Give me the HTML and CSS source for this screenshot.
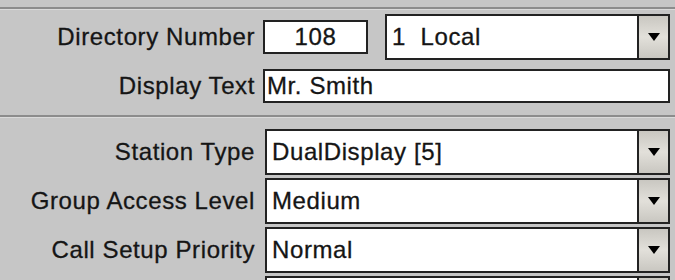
FILE: index.html
```html
<!DOCTYPE html>
<html lang="en">
<head>
    <meta charset="UTF-8">
    <title>Station Settings</title>
    <link rel="stylesheet" href="styles.css">
</head>
<body>
    <div class="separator"></div>
    <div class="section first">
        <div class="row">
            <div class="label">Directory Number</div>
            <div class="field-group">
                <div class="textbox number">108</div>
                <div class="dropdown">
                    <div class="value">1&nbsp;&nbsp;Local</div>
                    <div class="arrow-button"><span class="arrow"></span></div>
                </div>
            </div>
        </div>
        <div class="row short">
            <div class="label">Display Text</div>
            <div class="textbox">Mr. Smith</div>
        </div>
    </div>
    <div class="separator"></div>
    <div class="section second">
        <div class="row">
            <div class="label">Station Type</div>
            <div class="dropdown">
                <div class="value">DualDisplay [5]</div>
                <div class="arrow-button"><span class="arrow"></span></div>
            </div>
        </div>
        <div class="row">
            <div class="label">Group Access Level</div>
            <div class="dropdown">
                <div class="value">Medium</div>
                <div class="arrow-button"><span class="arrow"></span></div>
            </div>
        </div>
        <div class="row">
            <div class="label">Call Setup Priority</div>
            <div class="dropdown">
                <div class="value">Normal</div>
                <div class="arrow-button"><span class="arrow"></span></div>
            </div>
        </div>
        <div class="row">
            <div class="label"></div>
            <div class="dropdown">
                <div class="value"></div>
                <div class="arrow-button"><span class="arrow"></span></div>
            </div>
        </div>
    </div>
</body>
</html>
```

FILE: styles.css
```css
body {
    margin: 0;
    background-color: #c6c6c6;
    font-family: "Liberation Sans", Arial, sans-serif;
    font-size: 24px;
    letter-spacing: 0.6px;
    color: #151515;
    -webkit-text-stroke: 0.3px #151515;
    overflow: hidden;
}

.separator {
    margin-top: 7px;
    border-top: 2px solid #8c8c8c;
    border-bottom: 1px solid #dadada;
}

.section {
    display: flex;
    flex-direction: column;
    padding-right: 5px;
}

.section.first {
    padding-top: 4px;
    padding-bottom: 5px;
    gap: 9px;
}

.section.second {
    padding-top: 11px;
    gap: 3px;
}

.row {
    display: grid;
    grid-template-columns: 255px 1fr;
    column-gap: 8px;
    align-items: center;
    height: 46px;
}

.row.short {
    height: 34px;
}

.label {
    text-align: right;
    white-space: nowrap;
}

.field-group {
    display: flex;
    align-items: center;
    gap: 17px;
}

.textbox {
    box-sizing: border-box;
    height: 34px;
    line-height: 30px;
    padding: 0 2px;
    background: #ffffff;
    border: 2px solid #222222;
    white-space: nowrap;
}

.textbox.number {
    width: 105px;
    text-align: center;
}

.dropdown {
    box-sizing: border-box;
    flex: 1;
    height: 46px;
    display: flex;
    background: #ffffff;
    border: 2px solid #222222;
}

.second .dropdown {
    margin-left: 2px;
}

.dropdown .value {
    flex: 1;
    line-height: 42px;
    padding-left: 5px;
    white-space: nowrap;
}

.arrow-button {
    width: 29px;
    display: flex;
    align-items: center;
    justify-content: center;
    border-left: 2px solid #222222;
    background: linear-gradient(#c9c7c1, #e2e0da 50%, #c9c7c1);
}

.arrow {
    width: 0;
    height: 0;
    border-left: 6px solid transparent;
    border-right: 6px solid transparent;
    border-top: 8px solid #000000;
}
```
